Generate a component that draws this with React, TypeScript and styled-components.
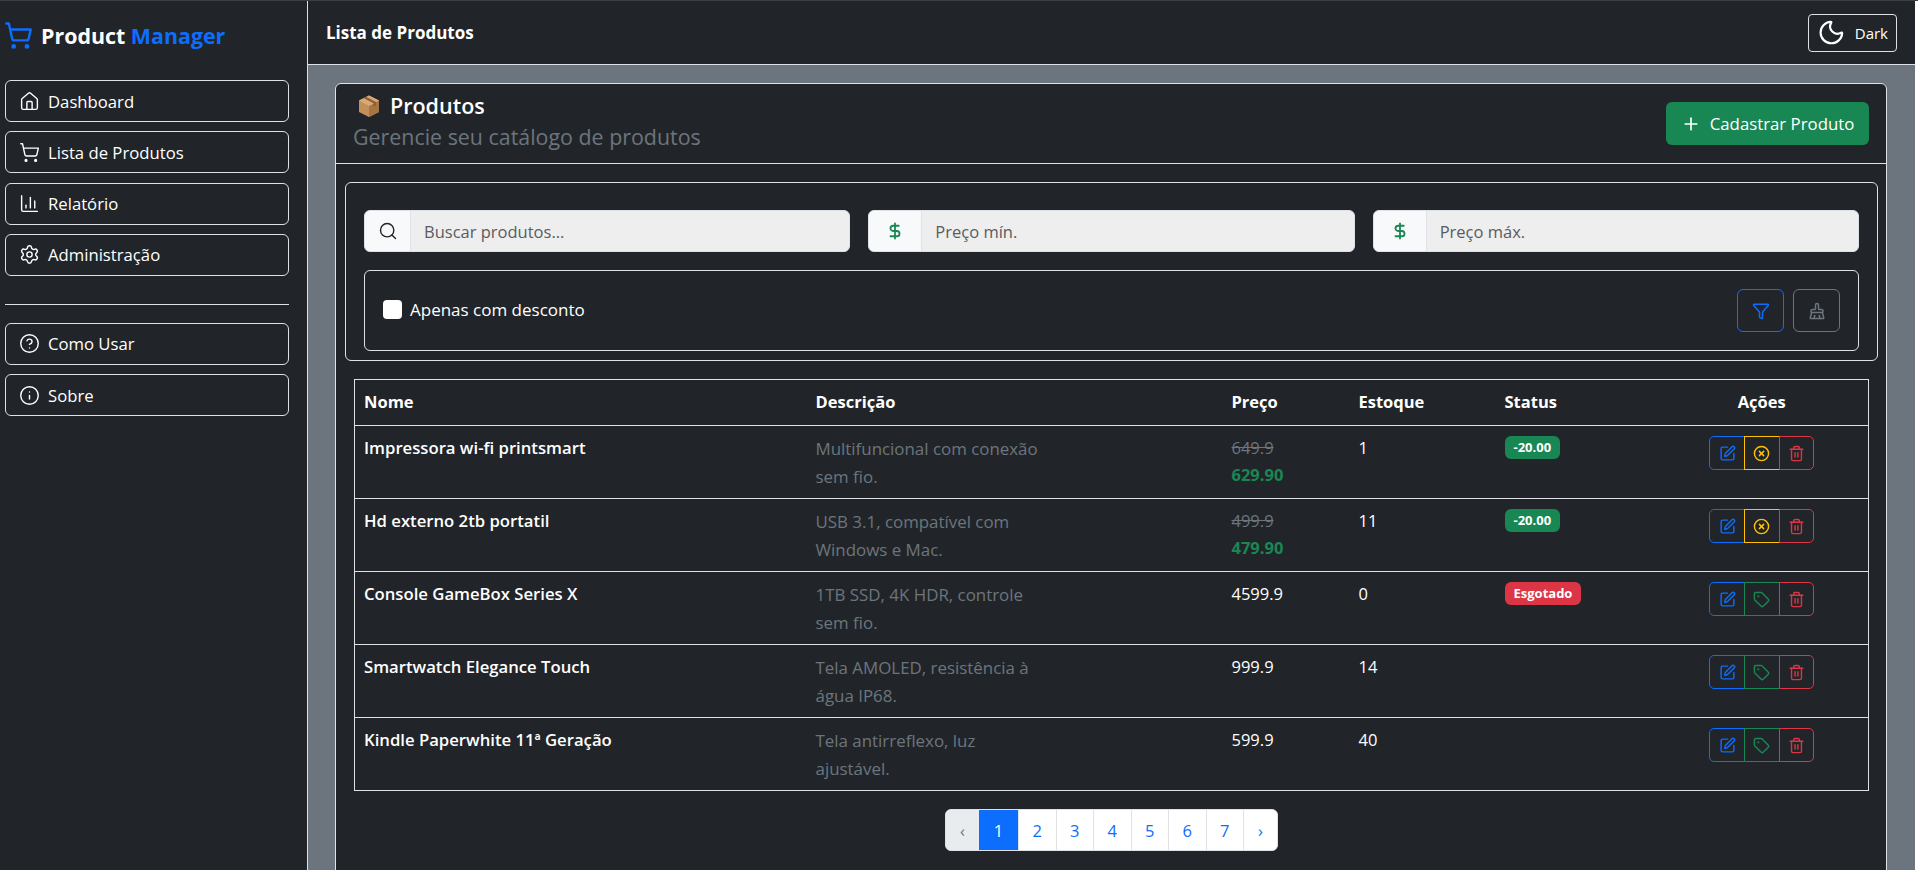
import * as React from 'react';
import styled, { createGlobalStyle } from 'styled-components';
import {
  BrushCleaning,
  ChartColumn,
  CircleHelp,
  CircleX,
  DollarSign,
  Funnel,
  House,
  Info,
  Moon,
  Plus,
  Search,
  Settings,
  ShoppingCart,
  SquarePen,
  Tag,
  Trash2,
} from 'lucide-react';

const GlobalStyle = createGlobalStyle`
  html, body {
    margin: 0;
    height: 870px;
    overflow: hidden;
    background: #fff;
    font-family: "Open Sans", "Noto Sans", sans-serif;
    font-size: 16.5px;
    color: #fff;
  }
  * { box-sizing: border-box; }
`;

const Layout = styled.div`
  display: flex;
  height: 870px;
  border-top: 1px solid #3a3f44;
`;

const Sidebar = styled.aside`
  width: 308px;
  flex: none;
  background: #212529;
  border-right: 1px solid #dee2e6;
  padding: 0 18px 0 5px;
`;

const Logo = styled.div`
  display: flex;
  align-items: center;
  gap: 8px;
  height: 69px;
  margin-left: -1px;
  font-size: 21.4px;
  font-weight: 700;
  svg { color: #0d6efd; flex: none; }
  span { color: #0d6efd; }
`;

const NavList = styled.nav<{ $first?: boolean }>`
  display: flex;
  flex-direction: column;
  gap: 9.33px;
  margin-top: ${p => (p.$first ? '10px' : '0')};
`;

const NavItem = styled.div`
  display: flex;
  align-items: center;
  gap: 8px;
  height: 42px;
  padding: 0 13px;
  border: 1px solid #dee2e6;
  border-radius: 6px;
  font-size: 16.7px;
`;

const Divider = styled.hr`
  border: 0;
  border-top: 1px solid #dee2e6;
  margin: 28px 0 18px;
`;

const Main = styled.main`
  flex: 1;
  min-width: 0;
  display: flex;
  flex-direction: column;
  margin-right: 3px;
  background: #6c757d;
`;

const Topbar = styled.header`
  display: flex;
  align-items: center;
  justify-content: space-between;
  height: 64px;
  flex: none;
  padding: 0 18px;
  background: #212529;
  border-bottom: 1px solid #dee2e6;
  font-weight: 700;
  font-size: 17px;
`;

const ThemeButton = styled.div`
  display: flex;
  align-items: center;
  gap: 9px;
  height: 38px;
  width: 89px;
  padding: 0 8px;
  border: 1px solid #dee2e6;
  border-radius: 4px;
  font-size: 15px;
  font-weight: 400;
`;

const Content = styled.div`
  flex: 1;
  min-height: 0;
  padding: 18px 28px 0 27px;
  overflow: hidden;
`;

const Card = styled.section`
  background: #212529;
  border: 1px solid #dee2e6;
  border-radius: 6px 6px 0 0;
  height: 900px;
`;

const CardHeader = styled.div`
  display: flex;
  align-items: center;
  justify-content: space-between;
  height: 80px;
  padding: 0 17px;
  border-bottom: 1px solid #dee2e6;
`;

const Title = styled.h1`
  display: flex;
  align-items: center;
  gap: 9px;
  margin: -1px 0 1px 4px;
  font-size: 21.5px;
  font-weight: 600;
  line-height: 26px;
`;

const Subtitle = styled.div`
  font-size: 21.4px;
  line-height: 34px;
  color: #6c757d;
`;

const AddButton = styled.div`
  display: flex;
  align-items: center;
  gap: 9px;
  height: 43px;
  width: 203px;
  justify-content: center;
  background: #198754;
  border-radius: 6px;
  font-size: 16.8px;
`;

const CardBody = styled.div`
  padding: 18px 17px 0 18px;
`;

const FilterPanel = styled.div`
  margin: 0 -9px 0 -9px;
  height: 179px;
  border: 1px solid #dee2e6;
  border-radius: 6px;
  padding: 27px 18px 0;
`;

const FilterRow = styled.div`
  display: grid;
  grid-template-columns: repeat(3, 1fr);
  gap: 18px;
`;

const InputGroup = styled.div`
  display: flex;
  height: 42px;
  border-radius: 6px;
  overflow: hidden;
  border: 1px solid #dee2e6;
  background: #eeeeee;
  color: #595c5f;
  font-size: 16.5px;
`;

const InputAddon = styled.div<{ $money?: boolean }>`
  width: ${p => (p.$money ? '53px' : '46px')};
  flex: none;
  display: flex;
  align-items: center;
  justify-content: center;
  background: #f8f9fa;
  border-right: 1px solid #dee2e6;
  color: ${p => (p.$money ? '#198754' : '#212529')};
`;

const Placeholder = styled.div`
  display: flex;
  align-items: center;
  padding-left: 13px;
`;

const OptionsPanel = styled.div`
  display: flex;
  align-items: center;
  justify-content: space-between;
  height: 81px;
  margin-top: 18px;
  padding: 0 18px;
  border: 1px solid #dee2e6;
  border-radius: 6px;
`;

const CheckLabel = styled.label`
  display: flex;
  align-items: center;
  gap: 8px;
  font-size: 17px;
  margin-top: -3px;
`;

const CheckBox = styled.span`
  width: 19px;
  height: 19px;
  background: #fff;
  border-radius: 4px;
  display: block;
`;

const IconButtons = styled.div`
  display: flex;
  gap: 9px;
`;

const IconButton = styled.div<{ $tone: string }>`
  width: 47px;
  height: 43px;
  display: flex;
  align-items: center;
  justify-content: center;
  border: 1px solid ${p => p.$tone};
  border-radius: 6px;
  color: ${p => p.$tone};
`;

const Table = styled.table`
  width: 1514px;
  margin-top: 18px;
  border-collapse: collapse;
  table-layout: fixed;
  th, td {
    border: 1px solid #dee2e6;
    border-left: 0;
    border-right: 0;
    padding: 10px 9px 6px;
    text-align: left;
    vertical-align: top;
    font-size: 16.5px;
    line-height: 24px;
  }
  th:first-child, td:first-child { border-left: 1px solid #dee2e6; }
  th:last-child, td:last-child { border-right: 1px solid #dee2e6; }
  th { font-weight: 700; height: 46px; }
  td { height: 73px; }
`;

const ActionsHead = styled.th`
  && { text-align: center; }
`;

const Name = styled.div`
  font-weight: 600;
  font-size: 16.7px;
`;

const Description = styled.div`
  color: #6c757d;
  width: 232px;
  font-size: 16.9px;
  line-height: 28px;
  margin-top: -1px;
`;

const OldPrice = styled.div`
  color: #6c757d;
  text-decoration: line-through;
`;

const NewPrice = styled.div`
  color: #198754;
  font-weight: 700;
  margin-top: 3px;
`;

const Badge = styled.span<{ $tone: string }>`
  display: inline-block;
  padding: 0 9px;
  height: 23px;
  line-height: 22px;
  border-radius: 6px;
  background: ${p => p.$tone};
  font-size: 13px;
  font-weight: 700;
  vertical-align: top;
`;

const ActionGroup = styled.div`
  display: flex;
  width: 105px;
  margin: 0 auto;
`;

const ActionButton = styled.div<{ $tone: string }>`
  flex: 1;
  height: 34px;
  display: flex;
  align-items: center;
  justify-content: center;
  border: 1px solid ${p => p.$tone};
  margin-left: -1px;
  color: ${p => p.$tone};
  &:first-child { border-radius: 5px 0 0 5px; margin-left: 0; }
  &:last-child { border-radius: 0 5px 5px 0; }
`;

const Pagination = styled.div`
  display: flex;
  justify-content: center;
  margin-top: 18px;
`;

const PageList = styled.div`
  display: flex;
  height: 42px;
  border-radius: 6px;
  overflow: hidden;
  background: #fff;
  border: 1px solid #dee2e6;
`;

const PageItem = styled.div<{ $state?: 'active' | 'disabled' }>`
  display: flex;
  align-items: center;
  justify-content: center;
  width: 37.5px;
  border-left: 1px solid #dee2e6;
  color: ${p => (p.$state === 'active' ? '#fff' : p.$state === 'disabled' ? '#6c757d' : '#0d6efd')};
  background: ${p => (p.$state === 'active' ? '#0d6efd' : p.$state === 'disabled' ? '#e9ecef' : '#fff')};
  ${p => p.$state === 'active' && 'width: 39px; border-left: 0;'}
  &:first-child { border-left: 0; width: 33px; }
  &:last-child { width: 34px; }
`;

const BoxIcon = () => (
  <svg width="24" height="24" viewBox="0 0 24 24">
    <path d="M12 1.5 22 6.5V18L12 23 2 18V6.5z" fill="#c58f5c" />
    <path d="M12 12 22 6.5V18L12 23z" fill="#a87443" />
    <path d="M12 1.5 22 6.5 12 12 2 6.5z" fill="#d9a877" />
    <path d="M6.5 4 16.5 9.2V13L19 11.6V8L9 2.8z" fill="#8d5f35" />
  </svg>
);

const navTop = [
  { icon: <House size={21} strokeWidth={1.6} />, label: 'Dashboard' },
  { icon: <ShoppingCart size={21} strokeWidth={1.6} />, label: 'Lista de Produtos' },
  { icon: <ChartColumn size={21} strokeWidth={1.6} />, label: 'Relatório' },
  { icon: <Settings size={21} strokeWidth={1.6} />, label: 'Administração' },
];

const navBottom = [
  { icon: <CircleHelp size={21} strokeWidth={1.6} />, label: 'Como Usar' },
  { icon: <Info size={21} strokeWidth={1.6} />, label: 'Sobre' },
];

const products = [
  { name: 'Impressora wi-fi printsmart', desc: 'Multifuncional com conexão sem fio.', old: '649.9', price: '629.90', stock: 1, badge: '-20.00' },
  { name: 'Hd externo 2tb portatil', desc: 'USB 3.1, compatível com Windows e Mac.', old: '499.9', price: '479.90', stock: 11, badge: '-20.00' },
  { name: 'Console GameBox Series X', desc: '1TB SSD, 4K HDR, controle sem fio.', price: '4599.9', stock: 0, badge: 'Esgotado' },
  { name: 'Smartwatch Elegance Touch', desc: 'Tela AMOLED, resistência à água IP68.', price: '999.9', stock: 14 },
  { name: 'Kindle Paperwhite 11ª Geração', desc: 'Tela antirreflexo, luz ajustável.', price: '599.9', stock: 40 },
];

export default function App() {
  return (
    <>
      <GlobalStyle />
      <Layout>
        <Sidebar>
          <Logo>
            <ShoppingCart size={29} />
            <div>
              Product <span>Manager</span>
            </div>
          </Logo>
          <NavList $first>
            {navTop.map(item => (
              <NavItem key={item.label}>
                {item.icon}
                {item.label}
              </NavItem>
            ))}
          </NavList>
          <Divider />
          <NavList>
            {navBottom.map(item => (
              <NavItem key={item.label}>
                {item.icon}
                {item.label}
              </NavItem>
            ))}
          </NavList>
        </Sidebar>
        <Main>
          <Topbar>
            Lista de Produtos
            <ThemeButton>
              <Moon size={29} strokeWidth={1.8} />
              Dark
            </ThemeButton>
          </Topbar>
          <Content>
            <Card>
              <CardHeader>
                <div>
                  <Title>
                    <BoxIcon />
                    Produtos
                  </Title>
                  <Subtitle>Gerencie seu catálogo de produtos</Subtitle>
                </div>
                <AddButton>
                  <Plus size={20} />
                  Cadastrar Produto
                </AddButton>
              </CardHeader>
              <CardBody>
                <FilterPanel>
                  <FilterRow>
                    <InputGroup>
                      <InputAddon>
                        <Search size={20} strokeWidth={1.7} />
                      </InputAddon>
                      <Placeholder>Buscar produtos...</Placeholder>
                    </InputGroup>
                    <InputGroup>
                      <InputAddon $money>
                        <DollarSign size={18} strokeWidth={2.4} />
                      </InputAddon>
                      <Placeholder>Preço mín.</Placeholder>
                    </InputGroup>
                    <InputGroup>
                      <InputAddon $money>
                        <DollarSign size={18} strokeWidth={2.4} />
                      </InputAddon>
                      <Placeholder>Preço máx.</Placeholder>
                    </InputGroup>
                  </FilterRow>
                  <OptionsPanel>
                    <CheckLabel>
                      <CheckBox />
                      Apenas com desconto
                    </CheckLabel>
                    <IconButtons>
                      <IconButton $tone="#0d6efd">
                        <Funnel size={18} />
                      </IconButton>
                      <IconButton $tone="#6c757d">
                        <BrushCleaning size={18} />
                      </IconButton>
                    </IconButtons>
                  </OptionsPanel>
                </FilterPanel>
                <Table>
                  <colgroup>
                    <col style={{ width: 452 }} />
                    <col style={{ width: 416 }} />
                    <col style={{ width: 127 }} />
                    <col style={{ width: 146 }} />
                    <col style={{ width: 160 }} />
                    <col style={{ width: 213 }} />
                  </colgroup>
                  <thead>
                    <tr>
                      <th>Nome</th>
                      <th>Descrição</th>
                      <th>Preço</th>
                      <th>Estoque</th>
                      <th>Status</th>
                      <ActionsHead>Ações</ActionsHead>
                    </tr>
                  </thead>
                  <tbody>
                    {products.map(p => (
                      <tr key={p.name}>
                        <td>
                          <Name>{p.name}</Name>
                        </td>
                        <td>
                          <Description>{p.desc}</Description>
                        </td>
                        <td>
                          {p.old && <OldPrice>{p.old}</OldPrice>}
                          {p.old ? <NewPrice>{p.price}</NewPrice> : p.price}
                        </td>
                        <td>{p.stock}</td>
                        <td>
                          {p.badge && (
                            <Badge $tone={p.badge === 'Esgotado' ? '#dc3545' : '#198754'}>{p.badge}</Badge>
                          )}
                        </td>
                        <td>
                          <ActionGroup>
                            <ActionButton $tone="#0d6efd">
                              <SquarePen size={17} />
                            </ActionButton>
                            {p.old ? (
                              <ActionButton $tone="#ffc107">
                                <CircleX size={17} />
                              </ActionButton>
                            ) : (
                              <ActionButton $tone="#198754">
                                <Tag size={17} />
                              </ActionButton>
                            )}
                            <ActionButton $tone="#dc3545">
                              <Trash2 size={17} />
                            </ActionButton>
                          </ActionGroup>
                        </td>
                      </tr>
                    ))}
                  </tbody>
                </Table>
                <Pagination>
                  <PageList>
                    <PageItem $state="disabled">‹</PageItem>
                    <PageItem $state="active">1</PageItem>
                    {[2, 3, 4, 5, 6, 7].map(n => (
                      <PageItem key={n}>{n}</PageItem>
                    ))}
                    <PageItem>›</PageItem>
                  </PageList>
                </Pagination>
              </CardBody>
            </Card>
          </Content>
        </Main>
      </Layout>
    </>
  );
}
